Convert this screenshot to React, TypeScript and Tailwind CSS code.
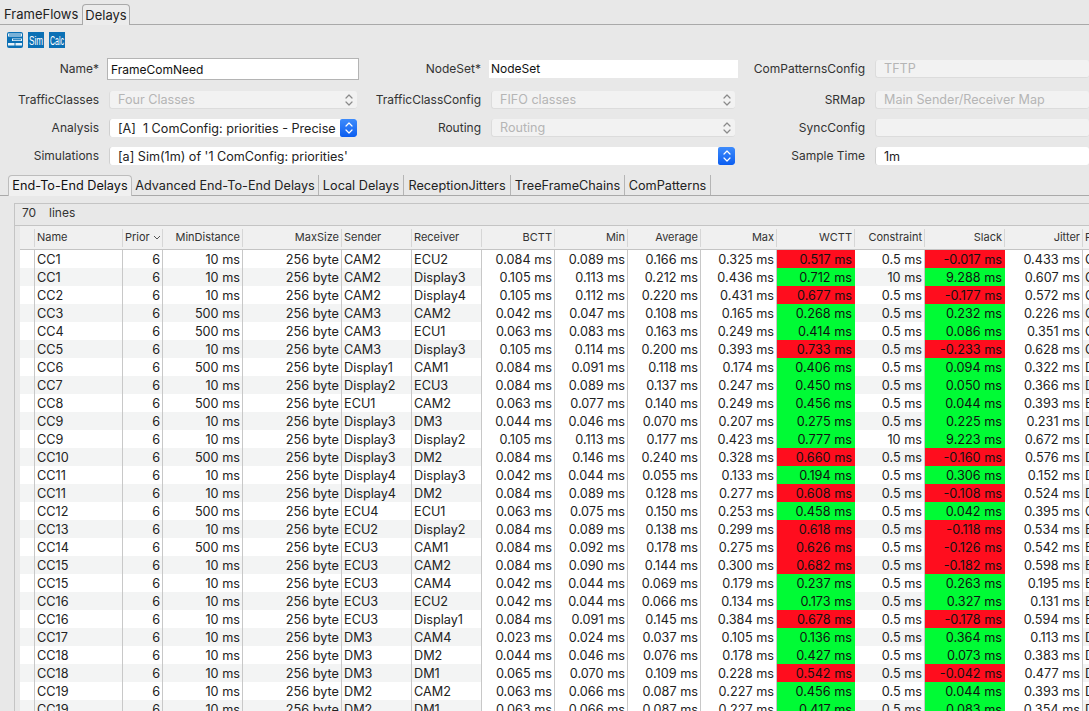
import React from "react";

const F = "font-['Inter','Liberation_Sans',sans-serif]";
const GRID =
  "grid grid-cols-[15px_88px_40px_80px_99px_70px_70px_73px_73px_73px_76px_78px_70px_80px_78px_40px]";

type Row = [string, string, string, string, string, string, string, string, string, string, string, string, string];

const rows: Row[] = [
  ["CC1", "10", "CAM2", "ECU2", "0.084", "0.089", "0.166", "0.325", "0.517", "0.5", "-0.017", "0.433", "C"],
  ["CC1", "10", "CAM2", "Display3", "0.105", "0.113", "0.212", "0.436", "0.712", "10", "9.288", "0.607", "C"],
  ["CC2", "10", "CAM2", "Display4", "0.105", "0.112", "0.220", "0.431", "0.677", "0.5", "-0.177", "0.572", "C"],
  ["CC3", "500", "CAM3", "CAM2", "0.042", "0.047", "0.108", "0.165", "0.268", "0.5", "0.232", "0.226", "C"],
  ["CC4", "500", "CAM3", "ECU1", "0.063", "0.083", "0.163", "0.249", "0.414", "0.5", "0.086", "0.351", "C"],
  ["CC5", "10", "CAM3", "Display3", "0.105", "0.114", "0.200", "0.393", "0.733", "0.5", "-0.233", "0.628", "C"],
  ["CC6", "500", "Display1", "CAM1", "0.084", "0.091", "0.118", "0.174", "0.406", "0.5", "0.094", "0.322", "D"],
  ["CC7", "10", "Display2", "ECU3", "0.084", "0.089", "0.137", "0.247", "0.450", "0.5", "0.050", "0.366", "D"],
  ["CC8", "500", "ECU1", "CAM2", "0.063", "0.077", "0.140", "0.249", "0.456", "0.5", "0.044", "0.393", "E"],
  ["CC9", "10", "Display3", "DM3", "0.044", "0.046", "0.070", "0.207", "0.275", "0.5", "0.225", "0.231", "D"],
  ["CC9", "10", "Display3", "Display2", "0.105", "0.113", "0.177", "0.423", "0.777", "10", "9.223", "0.672", "D"],
  ["CC10", "500", "Display3", "DM2", "0.084", "0.146", "0.240", "0.328", "0.660", "0.5", "-0.160", "0.576", "D"],
  ["CC11", "10", "Display4", "Display3", "0.042", "0.044", "0.055", "0.133", "0.194", "0.5", "0.306", "0.152", "D"],
  ["CC11", "10", "Display4", "DM2", "0.084", "0.089", "0.128", "0.277", "0.608", "0.5", "-0.108", "0.524", "D"],
  ["CC12", "500", "ECU4", "ECU1", "0.063", "0.075", "0.150", "0.253", "0.458", "0.5", "0.042", "0.395", "C"],
  ["CC13", "10", "ECU2", "Display2", "0.084", "0.089", "0.138", "0.299", "0.618", "0.5", "-0.118", "0.534", "E"],
  ["CC14", "500", "ECU3", "CAM1", "0.084", "0.092", "0.178", "0.275", "0.626", "0.5", "-0.126", "0.542", "E"],
  ["CC15", "10", "ECU3", "CAM2", "0.084", "0.090", "0.144", "0.300", "0.682", "0.5", "-0.182", "0.598", "E"],
  ["CC15", "10", "ECU3", "CAM4", "0.042", "0.044", "0.069", "0.179", "0.237", "0.5", "0.263", "0.195", "E"],
  ["CC16", "10", "ECU3", "ECU2", "0.042", "0.044", "0.066", "0.134", "0.173", "0.5", "0.327", "0.131", "E"],
  ["CC16", "10", "ECU3", "Display1", "0.084", "0.091", "0.145", "0.384", "0.678", "0.5", "-0.178", "0.594", "E"],
  ["CC17", "10", "DM3", "CAM4", "0.023", "0.024", "0.037", "0.105", "0.136", "0.5", "0.364", "0.113", "D"],
  ["CC18", "10", "DM3", "DM2", "0.044", "0.046", "0.076", "0.178", "0.427", "0.5", "0.073", "0.383", "D"],
  ["CC18", "10", "DM3", "DM1", "0.065", "0.070", "0.109", "0.228", "0.542", "0.5", "-0.042", "0.477", "D"],
  ["CC19", "10", "DM2", "CAM2", "0.063", "0.066", "0.087", "0.227", "0.456", "0.5", "0.044", "0.393", "D"],
  ["CC19", "10", "DM2", "DM1", "0.063", "0.066", "0.087", "0.227", "0.417", "0.5", "0.083", "0.354", "D"],
];

function Stepper({ color }: { color: string }) {
  return (
    <svg width="10" height="14" viewBox="0 0 10 14" fill="none" stroke={color} strokeWidth="1.2" strokeLinecap="round" strokeLinejoin="round">
      <path d="M2 5 L5 2 L8 5" />
      <path d="M2 9 L5 12 L8 9" />
    </svg>
  );
}

function Disabled({ text, stepper = true, className = "" }: { text: string; stepper?: boolean; className?: string }) {
  return (
    <div className={`h-[18px] flex items-center justify-between pl-[8px] pr-[3px] bg-[#f2f2f2] rounded-[3px] border-l border-b border-[#dcdcdc] text-[12.6px] text-[#b5b5b5] ${className}`}>
      <span className="pt-[2px]">{text}</span>
      {stepper && <Stepper color="#8a8a8a" />}
    </div>
  );
}

function Active({ text, stepper = true, className = "" }: { text: string; stepper?: boolean; className?: string }) {
  return (
    <div className={`h-[18px] flex items-center justify-between pl-[8px] bg-white rounded-[3px] border-l border-[#d0d0d0] text-[12.6px] text-[#222] overflow-hidden ${className}`}>
      <span className="whitespace-pre pt-[2px]">{text}</span>
      {stepper && (
        <div className="w-[17px] h-[18px] shrink-0 flex items-center justify-center rounded-[2px] bg-gradient-to-b from-[#3d8bfb] to-[#0a5df0]">
          <Stepper color="#ffffff" />
        </div>
      )}
    </div>
  );
}

function Label({ text, pad = "pr-[8px]" }: { text: string; pad?: string }) {
  return <div className={`h-[22px] flex items-center justify-end whitespace-nowrap text-[12px] text-[#333] ${pad}`}>{text}</div>;
}

function IconBox({ text }: { text: string }) {
  return (
    <div className="w-[16px] h-[16px] bg-[#0b70b5]">
      <svg width="16" height="16" viewBox="0 0 16 16">
        <text x="1" y="13" fontSize="13.5" fill="#ffffff" textLength="14" lengthAdjust="spacingAndGlyphs" fontFamily="Liberation Sans">{text}</text>
      </svg>
    </div>
  );
}

function Toolbar() {
  return (
    <div className="flex gap-[5px] pl-[7px] pt-[7px]">
      <div className="w-[16px] h-[16px] bg-[#0b70b5] rounded-[2px]">
        <svg width="16" height="16" viewBox="0 0 16 16" fill="#e8f2f8">
          <rect x="1" y="1.5" width="14" height="3" />
          <rect x="5" y="6.5" width="10" height="2.5" />
          <rect x="1" y="11" width="6.5" height="2.5" />
          <rect x="8.5" y="11" width="6.5" height="2.5" />
          <rect x="2" y="2.5" width="12" height="1" fill="#0b70b5" />
          <rect x="6" y="7.2" width="8" height="1" fill="#0b70b5" />
        </svg>
      </div>
      <IconBox text="Sim" />
      <IconBox text="Calc" />
    </div>
  );
}

function Form() {
  return (
    <div className="mt-[10px] grid grid-cols-[107px_252px_130px_249px_137px_1fr] grid-rows-[25px_22px_22px_22px] gap-y-[6px] items-center">
      <div className="self-start"><Label text="Name*" /></div>
      <div className="self-start h-[22px] flex items-center pl-[3px] pt-[2px] bg-white border border-[#b4b4b4] text-[12px] text-[#111]">FrameComNeed</div>
      <div className="self-start"><Label text="NodeSet*" /></div>
      <div className="self-start mt-[2px] h-[18px] flex items-center pl-[2px] bg-white text-[12px] text-[#111]">NodeSet</div>
      <div className="self-start"><Label text="ComPatternsConfig" pad="pr-[10px]" /></div>
      <div className="self-start mt-[2px]"><Disabled text="TFTP" stepper={false} /></div>

      <Label text="TrafficClasses" />
      <Disabled text="Four Classes" className="ml-[2px] mr-[2px]" />
      <Label text="TrafficClassConfig" />
      <Disabled text="FIFO classes" className="ml-[2px] mr-[3px]" />
      <Label text="SRMap" pad="pr-[10px]" />
      <Disabled text="Main Sender/Receiver Map" stepper={false} />

      <Label text="Analysis" />
      <Active text="[A]  1 ComConfig: priorities - Precise" className="ml-[2px] mr-[2px]" />
      <Label text="Routing" />
      <Disabled text="Routing" className="ml-[2px] mr-[3px]" />
      <Label text="SyncConfig" pad="pr-[10px]" />
      <Disabled text="" stepper={false} />

      <Label text="Simulations" />
      <Active text="[a] Sim(1m) of '1 ComConfig: priorities'" className="col-span-3 ml-[2px] mr-[3px]" />
      <Label text="Sample Time" pad="pr-[10px]" />
      <Active text="1m" stepper={false} />
    </div>
  );
}

function InnerTabs() {
  const others = [
    ["Advanced End-To-End Delays", "w-[187px]"],
    ["Local Delays", "w-[85px]"],
    ["ReceptionJitters", "w-[107px]"],
    ["TreeFrameChains", "w-[114px]"],
    ["ComPatterns", "w-[86px]"],
  ];
  return (
    <div className="mt-[8px] h-[21px] flex items-end border-b border-[#a9a9a9] pl-[8px] text-[12.7px]">
      <div className="w-[124px] h-[21px] pt-[1px] flex items-center justify-center bg-[#f0f0f0] border border-b-0 border-[#bdbdbd] rounded-t-[4px] text-[#111] -mb-px whitespace-nowrap">
        End-To-End Delays
      </div>
      {others.map(([t, w]) => (
        <div key={t} className={`${w} h-[20px] pt-[2px] flex items-center justify-center border-r border-[#b5b5b5] text-[#222] whitespace-nowrap`}>
          {t}
        </div>
      ))}
    </div>
  );
}

function HeaderCell({ children, left = false, noSep = false }: { children?: React.ReactNode; left?: boolean; noSep?: boolean }) {
  return (
    <div className="h-[23px] flex items-center">
      <div className={`flex-1 min-w-0 h-full flex items-center overflow-hidden whitespace-nowrap ${left ? "pl-[2px]" : "justify-end pr-[2px]"}`}>
        {children}
      </div>
      {!noSep && <div className="w-px h-[18px] bg-[#d6d6d6]" />}
    </div>
  );
}

function Header() {
  const names = ["BCTT", "Min", "Average", "Max", "WCTT", "Constraint", "Slack", "Jitter"];
  return (
    <div className={`${GRID} bg-[#f0f0f0] border-b border-[#c4c4c4] text-[11px] text-[#333]`}>
      <HeaderCell />
      <HeaderCell left>Name</HeaderCell>
      <div className="h-[23px] flex items-center">
        <div className="flex-1 min-w-0 flex items-center pl-[2px] overflow-hidden">
          <span className="w-[25px] overflow-hidden whitespace-nowrap">Prior</span>
          <svg width="8" height="5" viewBox="0 0 8 5" fill="none" stroke="#555" strokeWidth="1" className="ml-[3px] shrink-0">
            <path d="M1 1 L4 4 L7 1" />
          </svg>
        </div>
        <div className="w-px h-[18px] bg-[#d6d6d6]" />
      </div>
      <HeaderCell>MinDistance</HeaderCell>
      <HeaderCell>MaxSize</HeaderCell>
      <HeaderCell left>Sender</HeaderCell>
      <HeaderCell left>Receiver</HeaderCell>
      {names.map((n) => (
        <HeaderCell key={n}>{n}</HeaderCell>
      ))}
      <HeaderCell left noSep>Path</HeaderCell>
    </div>
  );
}

function TableRow({ r, odd }: { r: Row; odd: boolean }) {
  const stripe = odd ? "bg-[#f3f4f4]" : "bg-white";
  const base = "h-[18px] pt-[2px] flex items-center overflow-hidden whitespace-nowrap";
  const line = "border-r border-[#c8c8c8]";
  const L = `${base} ${line} ${stripe} pl-[2px]`;
  const R = `${base} ${line} ${stripe} justify-end pr-[2px]`;
  const W = `${base} ${line} bg-white justify-end pr-[2px]`;
  const late = r[10].startsWith("-");
  const hot = `${base} justify-end pr-[3px] text-[#111] ${late ? "bg-[#ff0d1e]" : "bg-[#00fb35]"}`;
  return (
    <div className={`${GRID} text-[12.7px] text-[#222]`}>
      <div className={`${base} ${line} ${stripe}`} />
      <div className={L}>{r[0]}</div>
      <div className={R}>6</div>
      <div className={R}>{r[1]} ms</div>
      <div className={R}>256 byte</div>
      <div className={L}>{r[2]}</div>
      <div className={L}>{r[3]}</div>
      <div className={W}>{r[4]} ms</div>
      <div className={W}>{r[5]} ms</div>
      <div className={W}>{r[6]} ms</div>
      <div className={W}>{r[7]} ms</div>
      <div className={hot}>{r[8]} ms</div>
      <div className={R}>{r[9]} ms</div>
      <div className={hot}>{r[10]} ms</div>
      <div className={W}>{r[11]} ms</div>
      <div className={`${base} ${stripe} pl-[2px]`}>{r[12]}</div>
    </div>
  );
}

export default function App() {
  return (
    <div className={`w-[1089px] h-[711px] overflow-hidden bg-[#e8e8e8] text-[13px] leading-none ${F}`}>
      <div className="h-[25px] flex items-end border-b border-[#a9a9a9]">
        <div className="w-[82px] h-[20px] flex items-center pl-[4px] text-[#222]">FrameFlows</div>
        <div className="w-[48px] h-[21px] -mb-px flex items-center justify-center bg-[#ececec] border border-b-0 border-[#a9a9a9] rounded-t-[4px] text-[#222]">Delays</div>
      </div>
      <Toolbar />
      <Form />
      <InnerTabs />
      <div className="mt-[7px] ml-[14px] border-l border-t border-[#c4c4c4]">
        <div className="h-[21px] flex items-center pl-[7px] pb-[3px] text-[12px] text-[#333]">
          <span className="w-[27px]">70</span>
          <span>lines</span>
        </div>
        <div className="border-t border-[#c4c4c4] pl-[5px]">
          <Header />
          {rows.map((r, i) => (
            <TableRow key={i} r={r} odd={i % 2 === 1} />
          ))}
        </div>
      </div>
    </div>
  );
}
